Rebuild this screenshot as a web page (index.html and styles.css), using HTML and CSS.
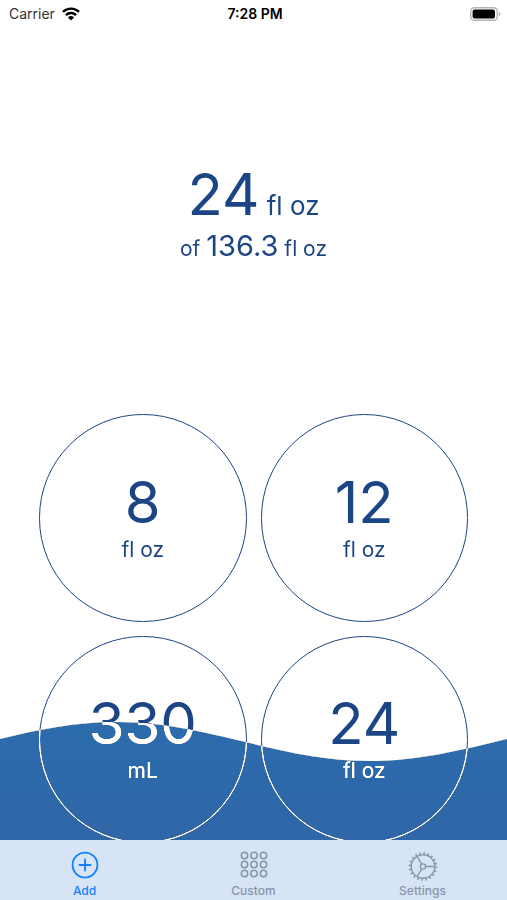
FILE: index.html
```
<!DOCTYPE html>
<html lang="en">
<head>
  <meta charset="UTF-8">
  <meta name="viewport" content="width=device-width, initial-scale=1.0">
  <link rel="stylesheet" href="styles.css">
  <title>Water Tracker</title>
</head>
<body>

  <div class="app">
    <header class="status-bar">
      <div class="carrier">
        <span>Carrier</span>
        <svg width="18" height="14" viewBox="0 0 18 14" fill="none" stroke="#000" stroke-width="2.4">
          <path d="M1 4.9a11.4 11.4 0 0 1 16 0" />
          <path d="M3.9 8.1a7.3 7.3 0 0 1 10.2 0" />
          <path d="M9 13.6 5.9 10.5a4.5 4.5 0 0 1 6.2 0z" fill="#000" stroke="none" />
        </svg>
      </div>
      <div class="time">7:28 PM</div>
      <div class="battery">
        <svg width="31" height="14" viewBox="0 0 31 14">
          <rect x=".7" y=".7" width="26.6" height="12.6" rx="3.8" fill="#fff" stroke="#b4b4b4" stroke-width="1.4" />
          <rect x="2.6" y="2.6" width="22.4" height="8.8" rx="2" fill="#000" />
          <path d="M28.8 5v4c1-.4 1.6-1.1 1.6-2s-.6-1.6-1.6-2z" fill="#b4b4b4" />
        </svg>
      </div>
    </header>

    <main class="content">
      <section class="total">
        <p class="current"><span class="amount">24</span> fl oz</p>
        <p class="goal">of <span class="goal-amount">136.3</span> fl oz</p>
      </section>

      <div class="drinks">
        <button type="button" class="drink"><span class="amount">8</span><span class="unit">fl oz</span></button>
        <button type="button" class="drink"><span class="amount">12</span><span class="unit">fl oz</span></button>
        <button type="button" class="drink"><span class="amount">330</span><span class="unit">mL</span></button>
        <button type="button" class="drink"><span class="amount">24</span><span class="unit">fl oz</span></button>
      </div>

      <!-- stacked blend layers: white turns to water, blue text turns to white -->
      <div class="water water-invert"></div>
      <div class="water water-dodge"></div>
      <div class="water water-fill"></div>
    </main>

    <nav class="tab-bar">
      <a href="#add" class="tab active">
        <svg width="28" height="28" viewBox="0 0 28 28" fill="none" stroke="currentColor" stroke-width="1.8" stroke-linecap="round">
          <circle cx="14" cy="14" r="12.4" />
          <path d="M14 8.5v11M8.5 14h11" />
        </svg>
        Add
      </a>
      <a href="#custom" class="tab">
        <svg width="28" height="28" viewBox="0 0 28 28" fill="none" stroke="currentColor" stroke-width="1.5">
          <circle cx="4.5" cy="4.5" r="3.2" /><circle cx="14" cy="4.5" r="3.2" /><circle cx="23.500" cy="4.5" r="3.2" />
          <circle cx="4.5" cy="13.5" r="3.2" /><circle cx="14" cy="13.5" r="3.2" /><circle cx="23.500" cy="13.5" r="3.2" />
          <circle cx="4.5" cy="22.5" r="3.2" /><circle cx="14" cy="22.5" r="3.2" /><circle cx="23.500" cy="22.5" r="3.2" />
        </svg>
        Custom
      </a>
      <a href="#settings" class="tab">
        <svg width="30" height="28" viewBox="0 0 30 28" fill="none" stroke="currentColor" stroke-width="1.4" overflow="visible">
          <circle cx="15" cy="15.5" r="11.8" />
          <circle cx="15" cy="15.5" r="13.3" stroke-width="2" stroke-dasharray="1.6 2.578" />
          <circle cx="15" cy="15.5" r="2.6" />
          <path d="M17.6 15.5h9.200M13.7 13.2 9.2 5.500M13.7 17.8 9.2 25.500" />
        </svg>
        Settings
      </a>
    </nav>
  </div>

  <svg class="defs" width="0" height="0" aria-hidden="true">
    <clipPath id="wave" clipPathUnits="objectBoundingBox">
      <path transform="scale(.00197239 .00847458)" d="M-137 39C-45 39 24 0 116 0S278 39 370 39S531 0 623 0V118H-137z" />
    </clipPath>
  </svg>

</body>
</html>
```
FILE: styles.css
```
body {
  margin: 0;
  font-family: Inter, 'Liberation Sans', sans-serif;
  color: #1b4584;
}

.app {
  display: flex;
  flex-direction: column;
  height: 100vh;
  background: #fff;
}

.status-bar {
  display: grid;
  grid-template-columns: 1fr auto 1fr;
  align-items: center;
  height: 27px;
  padding: 0 6px 0 9px;
  font-size: 14px;
  color: #000;
}

.status-bar svg {
  display: block;
}

.carrier {
  display: flex;
  align-items: center;
  gap: 7px;
  color: #333;
}

.time {
  font-weight: 600;
}

.battery {
  justify-self: end;
}

.content {
  position: relative;
  isolation: isolate;
  flex: 1;
  min-height: 0;
  overflow: hidden;
  background: #fff;
}

.total {
  padding: 138px 0 145px;
  text-align: center;
}

.total p {
  margin: 0;
  line-height: 40px;
}

.amount {
  font-size: 58px;
  line-height: 58px;
}

.current {
  font-size: 26px;
}

.goal {
  font-size: 21px;
}

.goal-amount {
  font-size: 29px;
}

.drinks {
  display: grid;
  grid-template-columns: 1fr 1fr;
  gap: 14px;
  padding: 0 39px;
}

.drink {
  display: flex;
  flex-direction: column;
  align-items: center;
  justify-content: center;
  gap: 6px;
  aspect-ratio: 1;
  padding: 0;
  border: 1px solid #1b4584;
  border-radius: 50%;
  background: none;
  font-family: inherit;
  color: inherit;
  cursor: pointer;
}

.unit {
  font-size: 21px;
  line-height: 26px;
}

.water {
  position: absolute;
  left: 0;
  right: 0;
  bottom: 0;
  height: 118px;
  clip-path: url(#wave);
  pointer-events: none;
}

.water-invert {
  background: #fff;
  mix-blend-mode: difference;
}

.water-dodge {
  background: #808080;
  mix-blend-mode: color-dodge;
}

.water-fill {
  background: linear-gradient(#2b6cad, #2f66a7);
  mix-blend-mode: screen;
}

.tab-bar {
  display: grid;
  grid-template-columns: repeat(3, 1fr);
  height: 60px;
  background: #d6e4f5;
}

.tab {
  display: flex;
  flex-direction: column;
  align-items: center;
  padding-top: 11px;
  gap: 4px;
  font-size: 12px;
  line-height: 16px;
  font-weight: 500;
  color: #8796a8;
  text-decoration: none;
}

.tab.active {
  color: #117fff;
}

.defs {
  position: absolute;
}
```
